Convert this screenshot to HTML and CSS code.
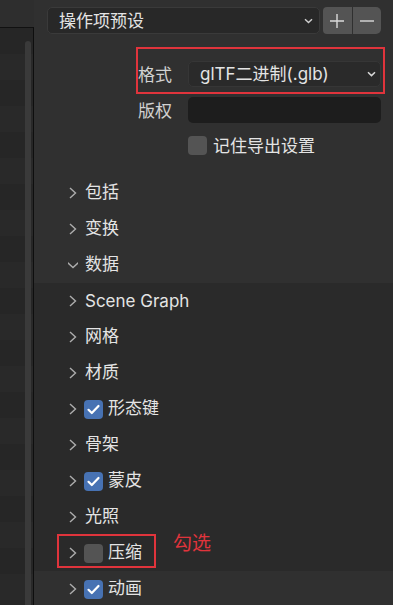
FILE: index.html
```html
<!DOCTYPE html>
<html lang="zh">
<head>
<meta charset="utf-8">
<link rel="stylesheet" href="styles.css">
</head>
<body>
<div class="app">
  <div class="side">
    <div class="side-box"><div class="scroll"></div></div>
  </div>
  <div class="main">
    <div class="preset">
      <div class="dd preset-dd">
        <span>操作项预设</span>
        <svg class="chev-d" width="9" height="6" viewBox="0 0 9 6"><path d="M1 1.2 L4.5 4.6 L8 1.2" fill="none" stroke="#cfcfcf" stroke-width="1.4"/></svg>
      </div>
      <div class="pm">
        <div class="btn"><svg width="16" height="16" viewBox="0 0 16 16"><path d="M8 1 V15 M1 8 H15" stroke="#dadada" stroke-width="1.4"/></svg></div>
        <div class="btn"><svg width="16" height="16" viewBox="0 0 16 16"><path d="M1 8 H15" stroke="#dadada" stroke-width="1.4"/></svg></div>
      </div>
    </div>
    <div class="form">
      <div class="lbl">格式</div>
      <div class="dd fmt-dd">
        <span><span class="latin">glTF</span>二进制<span class="latin">(.glb)</span></span>
        <svg class="chev-d" width="9" height="6" viewBox="0 0 9 6"><path d="M1 1.2 L4.5 4.6 L8 1.2" fill="none" stroke="#d8d8d8" stroke-width="1.5"/></svg>
      </div>
      <div class="lbl">版权</div>
      <div class="tf"></div>
      <div></div>
      <div class="remember"><span class="cb"></span><span>记住导出设置</span></div>
    </div>
    <div class="panels">
      <div class="row"><svg class="chev" width="10" height="12" viewBox="0 0 10 12"><path d="M2 1 L7.5 6 L2 11" fill="none" stroke="#adadad" stroke-width="1.4"/></svg><span class="t">包括</span></div>
      <div class="row"><svg class="chev" width="10" height="12" viewBox="0 0 10 12"><path d="M2 1 L7.5 6 L2 11" fill="none" stroke="#adadad" stroke-width="1.4"/></svg><span class="t">变换</span></div>
      <div class="row"><svg class="chev" width="10" height="12" viewBox="0 0 10 12"><path d="M-0.5 3.5 L5 8.5 L10.5 3.5" fill="none" stroke="#adadad" stroke-width="1.4"/></svg><span class="t">数据</span></div>
      <div class="sub">
        <div class="row"><svg class="chev" width="10" height="12" viewBox="0 0 10 12"><path d="M2 1 L7.5 6 L2 11" fill="none" stroke="#adadad" stroke-width="1.4"/></svg><span class="latin">Scene Graph</span></div>
        <div class="row"><svg class="chev" width="10" height="12" viewBox="0 0 10 12"><path d="M2 1 L7.5 6 L2 11" fill="none" stroke="#adadad" stroke-width="1.4"/></svg><span class="t">网格</span></div>
        <div class="row"><svg class="chev" width="10" height="12" viewBox="0 0 10 12"><path d="M2 1 L7.5 6 L2 11" fill="none" stroke="#adadad" stroke-width="1.4"/></svg><span class="t">材质</span></div>
        <div class="row"><svg class="chev" width="10" height="12" viewBox="0 0 10 12"><path d="M2 1 L7.5 6 L2 11" fill="none" stroke="#adadad" stroke-width="1.4"/></svg><span class="cb on"><svg width="19" height="19" viewBox="0 0 19 19"><path d="M4.5 9.8 L7.8 13 L14.5 6" fill="none" stroke="#fff" stroke-width="2.2" stroke-linecap="round" stroke-linejoin="round"/></svg></span><span class="t">形态键</span></div>
        <div class="row"><svg class="chev" width="10" height="12" viewBox="0 0 10 12"><path d="M2 1 L7.5 6 L2 11" fill="none" stroke="#adadad" stroke-width="1.4"/></svg><span class="t">骨架</span></div>
        <div class="row"><svg class="chev" width="10" height="12" viewBox="0 0 10 12"><path d="M2 1 L7.5 6 L2 11" fill="none" stroke="#adadad" stroke-width="1.4"/></svg><span class="cb on"><svg width="19" height="19" viewBox="0 0 19 19"><path d="M4.5 9.8 L7.8 13 L14.5 6" fill="none" stroke="#fff" stroke-width="2.2" stroke-linecap="round" stroke-linejoin="round"/></svg></span><span class="t">蒙皮</span></div>
        <div class="row"><svg class="chev" width="10" height="12" viewBox="0 0 10 12"><path d="M2 1 L7.5 6 L2 11" fill="none" stroke="#adadad" stroke-width="1.4"/></svg><span class="t">光照</span></div>
        <div class="row"><svg class="chev" width="10" height="12" viewBox="0 0 10 12"><path d="M2 1 L7.5 6 L2 11" fill="none" stroke="#adadad" stroke-width="1.4"/></svg><span class="cb"></span><span class="t">压缩</span></div>
      </div>
      <div class="row"><svg class="chev" width="10" height="12" viewBox="0 0 10 12"><path d="M2 1 L7.5 6 L2 11" fill="none" stroke="#adadad" stroke-width="1.4"/></svg><span class="cb on"><svg width="19" height="19" viewBox="0 0 19 19"><path d="M4.5 9.8 L7.8 13 L14.5 6" fill="none" stroke="#fff" stroke-width="2.2" stroke-linecap="round" stroke-linejoin="round"/></svg></span><span class="t">动画</span></div>
    </div>
    <div class="mark mark-fmt"></div>
    <div class="mark mark-comp"></div>
    <div class="note">勾选</div>
  </div>
</div>
</body>
</html>
```

FILE: styles.css
```css
* { box-sizing: border-box; }
html, body { margin: 0; padding: 0; }
body {
  width: 393px;
  height: 605px;
  overflow: hidden;
  background: #303030;
  font-family: "Noto Sans CJK SC", "Inter", sans-serif;
  font-size: 17px;
  line-height: 1.2;
  color: #e4e4e4;
}
.latin { font-family: "Inter", "Noto Sans CJK SC", sans-serif; }
.app {
  display: flex;
  height: 605px;
}
.side {
  width: 34px;
  flex: none;
  padding-top: 27px;
  background: #2e2e2e;
  display: flex;
}
.side-box {
  flex: 1;
  border-top: 1px solid #111;
  border-right: 1px solid #0e0e0e;
  background: repeating-linear-gradient(to bottom, #262626 0 26px, #292929 26px 52px);
  display: flex;
  justify-content: flex-end;
  padding: 13px 2px 0 0;
}
.scroll {
  width: 6px;
  background: #3a3a3a;
  border-radius: 3px 3px 0 0;
}
.main {
  flex: 1;
  position: relative;
  background: #303030;
}
.preset {
  display: flex;
  align-items: stretch;
  height: 27px;
  margin: 7px 12px 0 13px;
  gap: 3px;
}
.dd {
  display: flex;
  align-items: center;
  justify-content: space-between;
  background: #282828;
  border: 1px solid #3a3a3a;
  border-radius: 5px;
  padding: 0 6px 0 11px;
}
.preset-dd {
  flex: 1;
}
.chev-d { flex: none; }
.pm {
  display: flex;
  gap: 1px;
  width: 58px;
}
.btn {
  flex: 1;
  background: #545454;
  display: flex;
  align-items: center;
  justify-content: center;
}
.btn:first-child { border-radius: 4px 0 0 4px; }
.btn:last-child { border-radius: 0 5px 5px 0; }
.form {
  display: grid;
  grid-template-columns: 138px 1fr;
  column-gap: 16px;
  row-gap: 10px;
  margin: 27px 12px 0 0;
}
.lbl {
  text-align: right;
  color: #d2d2d2;
  align-self: center;
  line-height: 26px;
}
.fmt-dd {
  height: 26px;
  background: #2a2a2a;
  border-color: #363636;
  padding: 0 4px 0 11px;
}
.tf {
  height: 26px;
  background: #1d1d1d;
  border-radius: 5px;
}
.remember {
  display: flex;
  align-items: center;
  gap: 6px;
  height: 28px;
  margin-top: -2px;
}
.cb {
  width: 19px;
  height: 19px;
  border-radius: 4px;
  background: #545454;
  flex: none;
  display: flex;
}
.cb.on { background: #4772b3; }
.panels {
  margin-top: 16px;
}
.row {
  height: 36px;
  display: flex;
  align-items: center;
  padding-left: 34px;
}
.row .t { margin-top: -4px; }
.chev {
  flex: none;
  margin-right: 7px;
}
.row .cb { margin-left: -1px; margin-right: 5px; }
.sub {
  background: #2a2a2a;
}
.mark {
  position: absolute;
  border: 2px solid #e0343c;
}
.mark-fmt {
  left: 102px;
  top: 47px;
  width: 249px;
  height: 47px;
}
.mark-comp {
  left: 23px;
  top: 534px;
  width: 99px;
  height: 34px;
}
.note {
  position: absolute;
  left: 139px;
  top: 530px;
  color: #e0343c;
  font-size: 19px;
  line-height: 24px;
}
```
